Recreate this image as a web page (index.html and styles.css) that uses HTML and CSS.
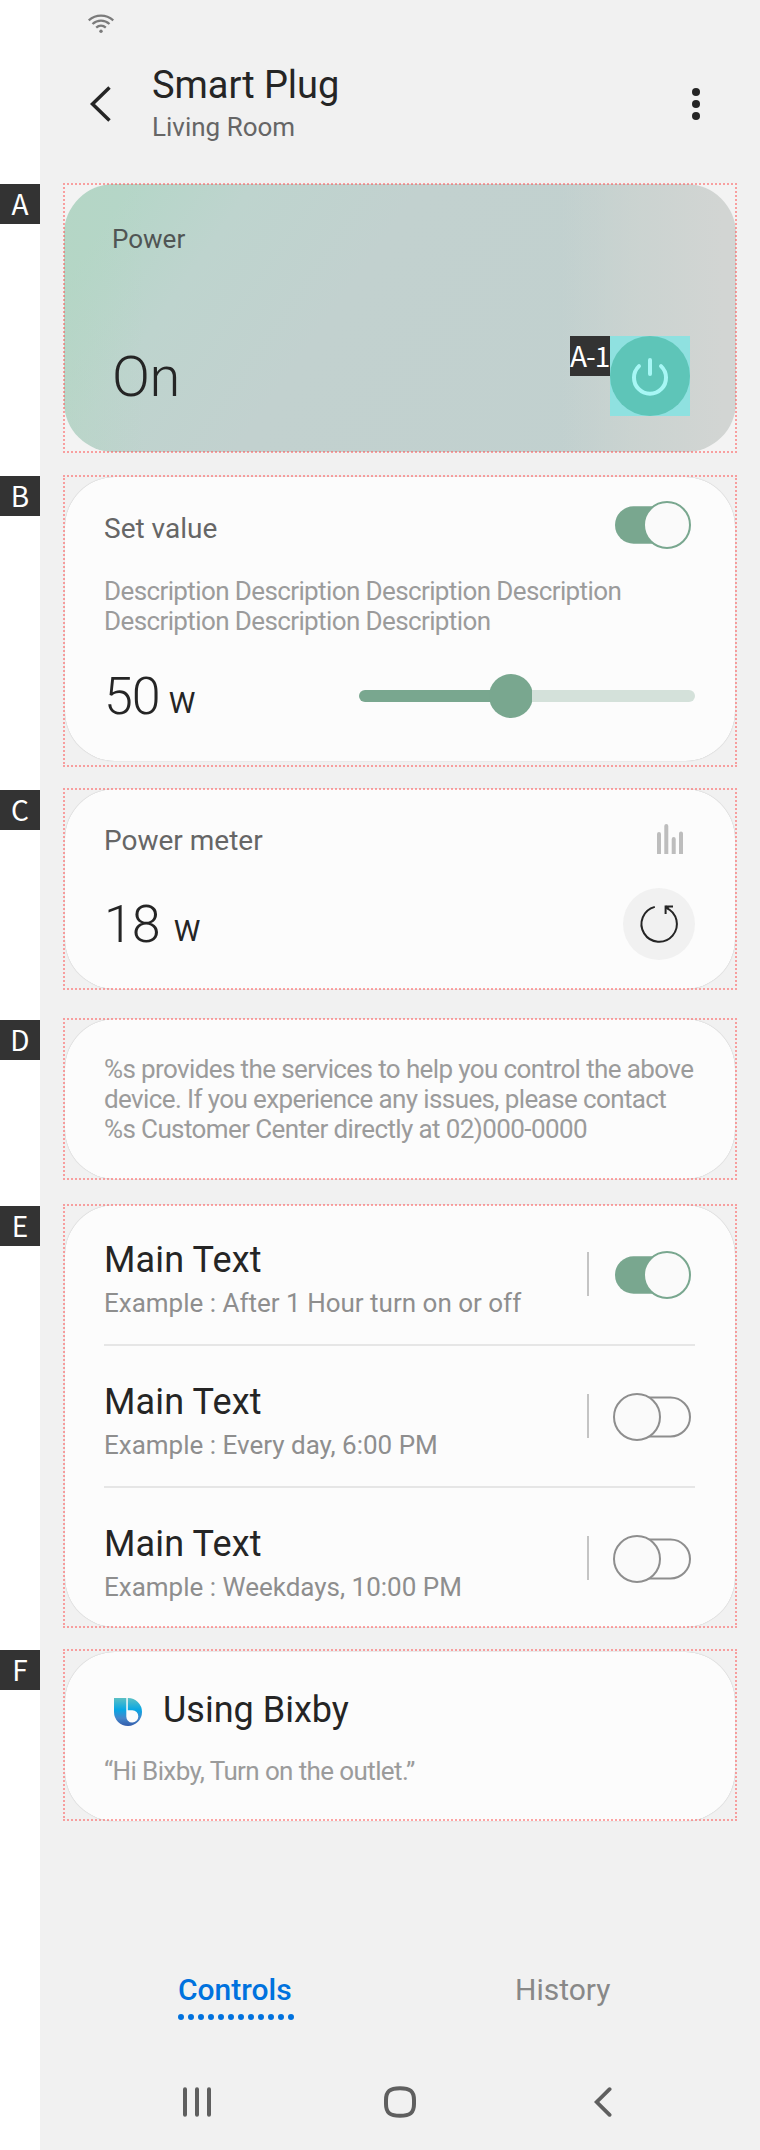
FILE: index.html
```html
<!DOCTYPE html>
<html lang="en">
<head>
<meta charset="utf-8">
<title>Smart Plug</title>
<link rel="stylesheet" href="styles.css">
</head>
<body>
<div class="page">
  <div class="status">
    <svg width="26" height="20" viewBox="0 0 26 20" fill="none" stroke="#7b7b7b" stroke-width="2.3">
      <path d="M.7 6.4C8 .1 18 .1 25.3 6.4"/>
      <path d="M4.5 10C9.500 5.500 16.500 5.500 21.500 10"/>
      <path d="M8.200 13.600c2.800-2.500 6.800-2.500 9.600 0"/>
      <circle cx="13" cy="17.300" r="1.700" fill="#7b7b7b" stroke="none"/>
    </svg>
  </div>
  <header class="header">
    <svg class="back" width="24" height="40" viewBox="0 0 24 40" fill="none" stroke="#252525" stroke-width="3.500"><path d="M21.500 3.500 4.500 20l17 16.500"/></svg>
    <div class="titles">
      <h1 class="title">Smart Plug</h1>
      <p class="room">Living Room</p>
    </div>
    <svg class="more" width="8" height="32" viewBox="0 0 8 32" fill="#252525"><circle cx="4" cy="4" r="4"/><circle cx="4" cy="16" r="4"/><circle cx="4" cy="28" r="4"/></svg>
  </header>

  <div class="row row-a">
    <span class="tag">A</span>
    <section class="frame">
      <div class="card power">
        <p class="power-label">Power</p>
        <div class="power-row">
          <span class="power-state">On</span>
          <span class="tag tag-inner">A-1</span>
          <svg class="power-btn" width="80" height="80" viewBox="0 0 80 80" fill="none" stroke="#a7f7f5" stroke-width="4" stroke-linecap="round">
            <circle cx="40" cy="40" r="40" fill="#5ec5b8" stroke="none"/>
            <path d="M29 30.100a16 16 0 1 0 22 0M40 24v14"/>
          </svg>
        </div>
      </div>
    </section>
  </div>

  <div class="row row-b">
    <span class="tag">B</span>
    <section class="frame">
      <div class="card setv">
        <div class="head">
          <span class="label">Set value</span>
          <svg class="toggle" width="80" height="48" viewBox="0 0 80 48"><rect x="4" y="5.300" width="72" height="37.400" rx="18.700" fill="#79a78f"/><circle cx="56" cy="24" r="23" fill="#fafafa" stroke="#79a78f" stroke-width="2"/></svg>
        </div>
        <p class="desc">Description Description Description Description<br>Description Description Description</p>
        <div class="value-row">
          <span class="value">50</span><span class="unit">W</span>
          <div class="slider"><div class="fill"></div><div class="thumb"></div><div class="rest"></div></div>
        </div>
      </div>
    </section>
  </div>

  <div class="row row-c">
    <span class="tag">C</span>
    <section class="frame">
      <div class="card meter">
        <div class="meter-head">
          <span class="label">Power meter</span>
          <svg class="bars" width="26" height="30" viewBox="0 0 26 30" fill="#bdbdbd"><path d="M0 30V10a2 2 0 0 1 4 0v20zM7.300 30V2a2 2 0 0 1 4 0v28zM14.700 30V15a2 2 0 0 1 4 0v15zM22 30V9.500a2 2 0 0 1 4 0V30z"/></svg>
        </div>
        <div class="value-row">
          <span class="value">18</span><span class="unit unit-wide">W</span>
          <svg class="refresh" width="72" height="72" viewBox="0 0 72 72" fill="none" stroke="#252525" stroke-width="2">
            <circle cx="36" cy="36" r="36" fill="#f1f1f1" stroke="none"/>
            <path d="M31.800 18.900A17.700 17.700 0 1 0 43.200 19.800"/>
            <path d="M50 18.400h-7.400v7.600"/><path d="M42.500 18.300l3.200 2.300"/>
          </svg>
        </div>
      </div>
    </section>
  </div>

  <div class="row row-d">
    <span class="tag">D</span>
    <section class="frame">
      <div class="card notice">
        <p class="desc">%s provides the services to help you control the above<br>device. If you experience any issues, please contact<br>%s Customer Center directly at 02)000-0000</p>
      </div>
    </section>
  </div>

  <div class="row row-e">
    <span class="tag">E</span>
    <section class="frame">
      <div class="card list">
        <div class="item">
          <div class="item-text"><h2 class="main">Main Text</h2><p class="sub">Example : After 1 Hour turn on or off</p></div>
          <span class="vline"></span>
          <svg class="toggle" width="80" height="48" viewBox="0 0 80 48"><rect x="4" y="5.300" width="72" height="37.400" rx="18.700" fill="#79a78f"/><circle cx="56" cy="24" r="23" fill="#fafafa" stroke="#79a78f" stroke-width="2"/></svg>
        </div>
        <div class="item">
          <div class="item-text"><h2 class="main">Main Text</h2><p class="sub">Example : Every day, 6:00 PM</p></div>
          <span class="vline"></span>
          <svg class="toggle" width="80" height="48" viewBox="0 0 80 48" fill="#fafafa" stroke="#8e8e8e" stroke-width="2"><rect x="20" y="4.500" width="59" height="39" rx="19.500" fill="#fcfcfc"/><circle cx="26" cy="24" r="23"/></svg>
        </div>
        <div class="item">
          <div class="item-text"><h2 class="main">Main Text</h2><p class="sub">Example : Weekdays, 10:00 PM</p></div>
          <span class="vline"></span>
          <svg class="toggle" width="80" height="48" viewBox="0 0 80 48" fill="#fafafa" stroke="#8e8e8e" stroke-width="2"><rect x="20" y="4.500" width="59" height="39" rx="19.500" fill="#fcfcfc"/><circle cx="26" cy="24" r="23"/></svg>
        </div>
      </div>
    </section>
  </div>

  <div class="row row-f">
    <span class="tag">F</span>
    <section class="frame">
      <div class="card bixby">
        <div class="bixby-head">
          <svg class="bixby-icon" width="28" height="28" viewBox="0 0 28 28">
            <defs><linearGradient id="bx" x1="0" y1="0" x2="0" y2="1"><stop offset="0" stop-color="#5cc0c4"/><stop offset=".42" stop-color="#08a7e4"/><stop offset=".72" stop-color="#4486cb"/><stop offset="1" stop-color="#335caa"/></linearGradient></defs>
            <path fill="url(#bx)" fill-rule="evenodd" d="M0 0h12.300v18.200a6 6.200 0 1 0 6-6h-4.500V0a14 14 0 1 1-13.800 14z"/>
          </svg>
          <h2 class="main">Using Bixby</h2>
        </div>
        <p class="desc">“Hi Bixby, Turn on the outlet.”</p>
      </div>
    </section>
  </div>

  <nav class="tabs">
    <div class="tab tab-on">Controls
      <svg width="118" height="6" viewBox="0 0 118 6"><path d="M3 3h111" fill="none" stroke="#0072de" stroke-width="6" stroke-linecap="round" stroke-dasharray="0 10"/></svg>
    </div>
    <div class="tab">History</div>
  </nav>
  <div class="navbar">
    <svg class="recents" width="28" height="36" viewBox="0 0 28 36" stroke="#5f5f5f" stroke-width="4" stroke-linecap="round"><path d="M2 5.200v25.600M14 5.200v25.600M26 5.200v25.600"/></svg>
    <svg class="home" width="32" height="36" viewBox="0 0 32 36" fill="none" stroke="#5f5f5f" stroke-width="4"><path d="M16 4.200c10 0 14 3 14 11.800v4c0 8.800-4 11.800-14 11.800S2 28.800 2 20v-4C2 7.200 6 4.200 16 4.200z"/></svg>
    <svg width="18" height="36" viewBox="0 0 18 36" fill="none" stroke="#5f5f5f" stroke-width="3.800" stroke-linecap="round"><path d="M15.600 5.200 2.700 18l12.900 12.800"/></svg>
  </div>
</div>
</body>
</html>
```
FILE: styles.css
```css
* { box-sizing: border-box; margin: 0; padding: 0; }
body { background: #fff; font-family: Roboto, "Liberation Sans", sans-serif; color: #252525; }
svg { display: block; flex: none; }
.page { width: 760px; height: 2150px; background: linear-gradient(90deg, #fff 40px, #f1f1f1 40px); white-space: nowrap; overflow: hidden; }

.status { height: 40px; padding: 14px 0 0 88px; }
.header { height: 143px; display: flex; align-items: flex-start; padding: 0 60px 0 88px; }
.back { margin: 44px 40px 0 0; }
.titles { flex: 1; padding-top: 23px; }
.title { font-size: 38px; line-height: 44px; font-weight: 400; letter-spacing: -.05px; }
.room { margin-top: 4px; font-size: 26px; line-height: 32px; color: #666; }
.more { margin-top: 48px; }

.row { display: flex; gap: 23px; align-items: flex-start; }
.tag { flex: none; width: 40px; height: 40px; margin-top: 1px; background: #333; color: #fff; font: 400 28px/38px "Noto Sans CJK KR", sans-serif; text-align: center; }
.frame { position: relative; width: 674px; padding: 1px; display: flex; }
/* dotted guide drawn over the card edge */
.frame::after { content: ""; position: absolute; inset: 0; border: 2px dotted rgba(255, 70, 70, .48); pointer-events: none; }
.card { flex: 1; border-radius: 50px; background: #fcfcfc; margin: 0 1px; box-shadow: 0 0 1px rgba(0, 0, 0, .3); padding: 0 40px 0 39px; }

.row-a .frame { height: 270px; background: #f3f3f3; }
.power {
  margin: 0; box-shadow: none; padding: 39px 46px 0 48px;
  background:
    linear-gradient(90deg, rgba(210,213,210,0) 74%, rgba(205,212,209,.8) 85%, #d2d5d3 98%),
    linear-gradient(90deg, rgba(180,214,194,.45) 0, rgba(180,214,194,0) 12%),
    linear-gradient(125deg, #b5d6c8 8%, #bed4ce 22%, #c2d1cf 42%, #c1d0cf 100%);
}
.power-label { font-size: 26px; line-height: 32px; color: #505554; }
.power-row { display: flex; align-items: flex-start; margin-top: 81px; }
.power-state { flex: 1; font-size: 56px; font-weight: 300; line-height: 64px; padding-top: 9px; letter-spacing: -.5px; }
.power-btn { background: #8fe1e0; }
.tag-inner { margin: 0; letter-spacing: -1px; text-align: left; }

.row-b { margin-top: 22px; }
.row-b .frame { height: 292px; padding-bottom: 6px; }
.setv { padding-top: 24px; margin-top: 1px; }
.head { display: flex; align-items: center; justify-content: space-between; height: 48px; }
.label { font-size: 28px; line-height: 32px; color: #666; }
.head .label { padding-top: 7px; }
.toggle { margin-right: 4px; }
.desc { font-size: 26px; line-height: 30px; color: #9b9b9b; letter-spacing: -.61px; }
.setv .desc { margin-top: 27px; }
.value-row { display: flex; align-items: center; }
.setv .value-row { margin-top: 30px; height: 60px; }
.value { font-size: 52px; font-weight: 300; line-height: 60px; letter-spacing: -1px; padding-top: 1px; }
.unit { font-size: 30px; line-height: 36px; margin: 14px 0 0 9px; }
.unit-wide { margin-left: 14px; }
.slider { margin-left: auto; width: 336px; display: flex; align-items: center; }
.fill { width: 131px; height: 12px; border-radius: 6px 0 0 6px; background: #79a78f; }
.thumb { width: 44px; height: 44px; border-radius: 50%; background: #79a78f; margin: 0 -1px; }
.rest { flex: 1; height: 12px; border-radius: 0 6px 6px 0; background: #d4e1da; }

.row-c { margin-top: 21px; }
.row-c .frame { height: 202px; }
.row-c > .tag, .row-d > .tag, .row-e > .tag { margin-top: 2px; }
.meter { padding-top: 35px; }
.meter-head { display: flex; justify-content: space-between; height: 64px; }
.meter-head .label { padding-top: 1px; }
.bars { margin-right: 12px; }
.refresh { margin-left: auto; }

.row-d { margin-top: 28px; }
.row-d .frame { height: 162px; }
.notice { padding-top: 35px; }

.row-e { margin-top: 24px; }
.row-e .frame { height: 424px; }
.item { display: flex; align-items: flex-start; height: 142px; border-bottom: 2px solid #e6e6e6; }
.item:first-child { height: 141px; }
.item:first-child .item-text { padding-top: 34px; }
.item:first-child .vline { margin-top: 47px; }
.item:first-child .toggle { margin-top: 46px; }
.item:last-child { border: 0; }
.item-text { flex: 1; padding-top: 35px; }
.main { font-size: 36px; line-height: 42px; font-weight: 400; letter-spacing: .15px; }
.sub { margin-top: 6px; font-size: 26px; line-height: 32px; color: #8e8e8e; }
.vline { width: 2px; height: 44px; margin: 48px 22px 0 0; background: #c4c4c4; }
.item .toggle { margin-top: 47px; }

.row-f { margin-top: 21px; }
.row-f .frame { height: 172px; padding-bottom: 0; }
.bixby { margin-top: 2px; padding-top: 37px; }
.bixby-head { display: flex; align-items: flex-start; gap: 21px; padding-left: 10px; }
.bixby-icon { margin-top: 9px; }
.bixby-head .main { letter-spacing: 0; }
.bixby .desc { margin-top: 25px; }

.tabs { display: flex; margin-top: 151px; height: 60px; padding-left: 178px; font-size: 30px; line-height: 36px; color: #888; }
.tab-on { width: 337px; color: #0072de; font-weight: 500; }
.tab-on svg { margin-top: 6px; }
.navbar { display: flex; margin-top: 52px; padding-left: 183px; }
.recents { margin-right: 173px; }
.home { margin-right: 178px; }
```
